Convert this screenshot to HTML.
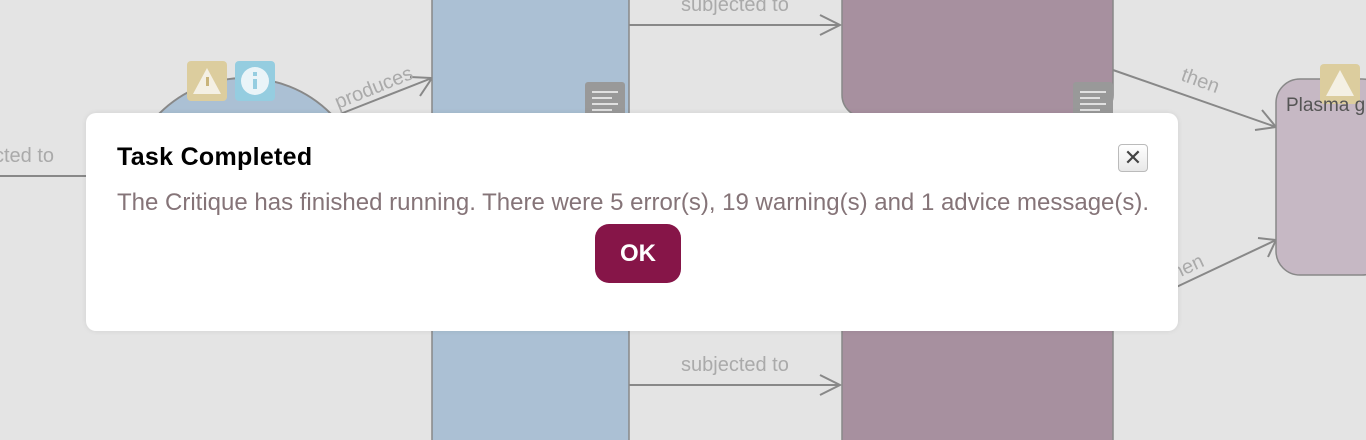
<!DOCTYPE html>
<html><head><meta charset="utf-8"><style>
html,body{margin:0;padding:0;width:1366px;height:440px;overflow:hidden;background:#e4e4e4;font-family:"Liberation Sans",Arial,sans-serif}
svg{position:absolute;left:0;top:0}
.dlg{position:absolute;left:86px;top:113px;width:1092px;height:218px;background:#fff;border-radius:10px;box-shadow:0 0 6px rgba(0,0,0,.08)}
.t{position:absolute;left:31px;top:30px;font-size:25px;font-weight:bold;color:#000;letter-spacing:.3px}
.m{position:absolute;left:31px;top:76px;font-size:24px;color:#857478;white-space:nowrap}
.x{position:absolute;left:1032px;top:31px;width:28px;height:26px;border:1px solid #bbb;border-radius:4px;background:linear-gradient(#fff,#e8e8e8);font-size:22px;line-height:26px;text-align:center;color:#444}
.ok{position:absolute;left:509px;top:111px;width:86px;height:59px;background:#861548;border-radius:14px;color:#fff;font-weight:bold;font-size:24px;line-height:59px;text-align:center}
</style></head><body>
<svg width="1366" height="440" viewBox="0 0 1366 440">
<g stroke="#888" stroke-width="2" fill="none">
<path d="M0 176H90"/>
<path d="M629 25H840M820 15l20 10-20 10"/>
<path d="M629 385H840M820 375l20 10-20 10"/>
<path d="M330 118L432 78M410 77l22 1-12 18"/>
<path d="M1113 70L1276 127M1255 130l21-3-14-17"/>
<path d="M1170 290L1276 240M1258 238l18 2-8 17"/>
</g>
<circle cx="245" cy="199" r="121" fill="#abc0d4" stroke="#888" stroke-width="2"/>
<rect x="432" y="-10" width="197" height="460" fill="#abc0d4" stroke="#888" stroke-width="1.5"/>
<rect x="842" y="-30" width="271" height="147" rx="22" fill="#a7909f" stroke="#888" stroke-width="1.5"/>
<rect x="842" y="300" width="271" height="150" fill="#a7909f" stroke="#888" stroke-width="1.5"/>
<rect x="1276" y="79" width="110" height="196" rx="24" fill="#c6b8c4" stroke="#888" stroke-width="1.5"/>
<rect x="187" y="61" width="40" height="40" rx="4" fill="#dccd9e"/>
<path d="M207 68L193 94H221Z" fill="#f4f0e4"/><rect x="206" y="77" width="3" height="9" fill="#c9b47a"/>
<rect x="235" y="61" width="40" height="40" rx="4" fill="#95cde0"/>
<circle cx="255" cy="81" r="14" fill="#eaf4f8"/><rect x="253" y="79" width="4" height="10" fill="#95cde0"/><rect x="253" y="72" width="4" height="4" fill="#95cde0"/>
<rect x="1320" y="64" width="40" height="40" rx="4" fill="#dccd9e"/>
<path d="M1340 70L1326 96H1354Z" fill="#f4f0e4"/>
<rect x="585" y="82" width="40" height="34" rx="3" fill="#999"/>
<rect x="1073" y="82" width="40" height="34" rx="3" fill="#999"/>
<g stroke="#e0e0e0" stroke-width="2"><path d="M592 92h26M592 98h20M592 104h26M592 110h20M1080 92h26M1080 98h20M1080 104h26M1080 110h20"/></g>
<g font-family="Liberation Sans,Arial,sans-serif" font-size="20" fill="#aaa">
<text x="681" y="11">subjected to</text>
<text x="681" y="371">subjected to</text>
<text x="-6" y="162">cted to</text>
<text x="338" y="109" transform="rotate(-22 338 109)">produces</text>
<text x="1180" y="80" transform="rotate(20 1180 80)">then</text>
<text x="1170" y="282" transform="rotate(-25 1170 282)">then</text>
<text x="1286" y="111" fill="#555" font-size="19">Plasma g</text>
</g>
</svg>
<div class="dlg">
<div class="t">Task Completed</div>
<div class="m">The Critique has finished running. There were 5 error(s), 19 warning(s) and 1 advice message(s).</div>
<div class="x">✕</div>
<div class="ok">OK</div>
</div>
</body></html>
